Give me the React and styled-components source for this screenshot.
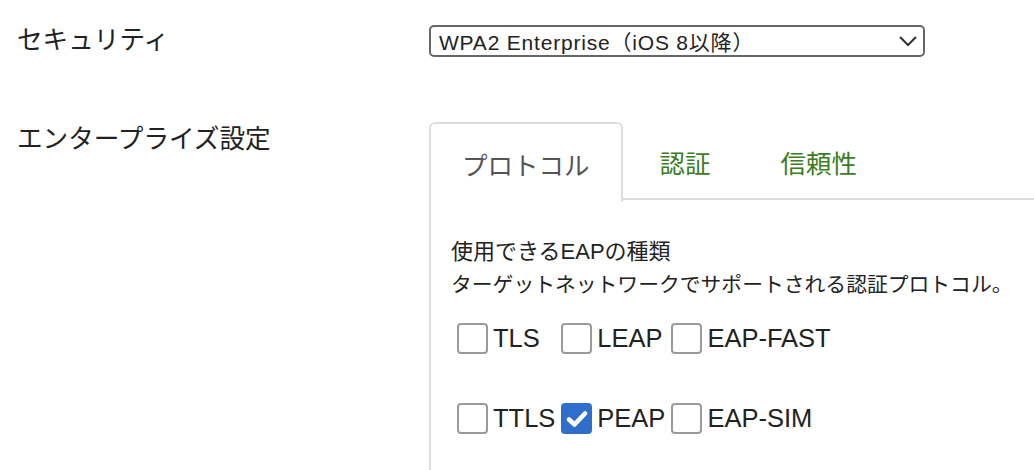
import React, { useState } from "react";
import styled, { createGlobalStyle } from "styled-components";

const Global = createGlobalStyle`
  html, body { margin: 0; padding: 0; background: #fff; overflow: hidden; }
  body {
    font-family: "Liberation Sans", "Noto Sans CJK JP", sans-serif;
    color: #222;
  }
`;

const Page = styled.div`
  width: 1034px;
  height: 470px;
  padding-top: 25px;
  box-sizing: border-box;
  display: flex;
  flex-direction: column;
  gap: 65px;
  overflow: hidden;
`;

const Row = styled.div`
  display: grid;
  grid-template-columns: 429px 1fr;
  align-items: ${(p) => (p.$top ? "start" : "center")};
`;

const Label = styled.div`
  padding-left: 17px;
  font-size: 25.6px;
  line-height: 30px;
  color: #222;
  padding-top: ${(p) => (p.$top ? "2px" : "0")};
  margin-top: ${(p) => (p.$top ? "0" : "-2px")};
`;

const SelectBox = styled.div`
  width: 496px;
  height: 32px;
  box-sizing: border-box;
  border: 2px solid #666;
  border-radius: 5px;
  display: flex;
  align-items: center;
  justify-content: space-between;
  padding: 0 5px 0 8px;
  font-size: 21px;
  letter-spacing: 0.8px;
  color: #222;
`;

const Chevron = () => (
  <svg width="20" height="12" viewBox="0 0 20 12">
    <path d="M2 2 L10 10 L18 2" fill="none" stroke="#333" strokeWidth="2" />
  </svg>
);

const TabsWrap = styled.div`
  width: 700px;
`;

const TabList = styled.div`
  display: flex;
  gap: 4px;
  border-bottom: 2px solid #ddd;
  height: 78px;
  box-sizing: border-box;
`;

const Tab = styled.div`
  padding: 0 31px;
  font-size: 25.5px;
  display: flex;
  align-items: center;
  box-sizing: border-box;
  height: ${(p) => (p.$active ? "80px" : "76px")};
  color: ${(p) => (p.$active ? "#555" : "#3b7d23")};
  background: #fff;
  border: 2px solid ${(p) => (p.$active ? "#ddd" : "transparent")};
  border-bottom: none;
  border-radius: 6px 6px 0 0;
  cursor: pointer;
`;

const Panel = styled.div`
  border-left: 2px solid #ddd;
  padding: 37px 0 40px 20px;
`;

const Heading = styled.div`
  font-size: 22px;
  line-height: 29px;
  color: #222;
`;

const Sub = styled.div`
  font-size: 20.8px;
  line-height: 26px;
  color: #222;
  margin-top: 6px;
`;

const Options = styled.div`
  display: grid;
  grid-template-columns: repeat(3, auto);
  justify-content: start;
  row-gap: 49px;
  margin-top: 25px;
`;

const Option = styled.label`
  display: flex;
  align-items: center;
  gap: 5px;
  padding-left: 6px;
  font-size: 25.5px;
  color: #222;
  cursor: pointer;
  line-height: 31px;
`;

const Box = styled.span`
  width: 31px;
  height: 31px;
  box-sizing: border-box;
  border-radius: 4px;
  border: ${(p) => (p.$checked ? "none" : "2px solid #9a9a9a")};
  background: ${(p) => (p.$checked ? "#2f6fcb" : "#fff")};
  display: inline-flex;
  align-items: center;
  justify-content: center;
  flex-shrink: 0;
`;

const Check = () => (
  <svg width="24" height="20" viewBox="0 0 24 20">
    <path d="M4 10.5 L9.5 15.5 L20 4.5" fill="none" stroke="#fff" strokeWidth="4.6" strokeLinecap="round" strokeLinejoin="round" />
  </svg>
);

const options = ["TLS", "LEAP", "EAP-FAST", "TTLS", "PEAP", "EAP-SIM"];

export default function App() {
  const [checked, setChecked] = useState({ PEAP: true });
  return (
    <>
      <Global />
      <Page>
        <Row>
          <Label>セキュリティ</Label>
          <SelectBox>
            <span>WPA2 Enterprise（iOS 8以降）</span>
            <Chevron />
          </SelectBox>
        </Row>
        <Row $top>
          <Label $top>エンタープライズ設定</Label>
          <TabsWrap>
            <TabList>
              <Tab $active>プロトコル</Tab>
              <Tab>認証</Tab>
              <Tab>信頼性</Tab>
            </TabList>
            <Panel>
              <Heading>使用できるEAPの種類</Heading>
              <Sub>ターゲットネットワークでサポートされる認証プロトコル。</Sub>
              <Options>
                {options.map((o) => (
                  <Option key={o} onClick={() => setChecked((c) => ({ ...c, [o]: !c[o] }))}>
                    <Box $checked={!!checked[o]}>{checked[o] && <Check />}</Box>
                    {o}
                  </Option>
                ))}
              </Options>
            </Panel>
          </TabsWrap>
        </Row>
      </Page>
    </>
  );
}
